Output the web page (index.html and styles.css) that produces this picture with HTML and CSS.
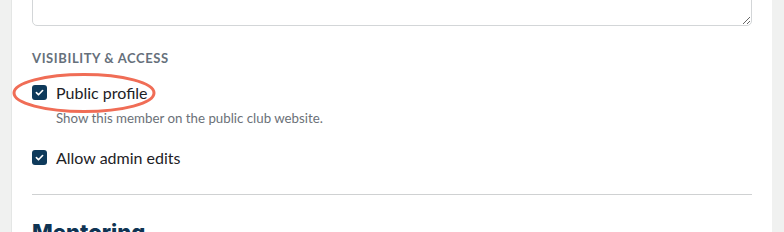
FILE: index.html
```html
<!DOCTYPE html>
<html lang="en">
<head>
  <meta charset="UTF-8">
  <title>Member settings</title>
  <link rel="stylesheet" href="styles.css">
</head>
<body>
  <div class="card">
    <textarea class="notes"></textarea>

    <section class="group">
      <h4 class="group-title">Visibility &amp; access</h4>

      <div class="check-row highlight">
        <label class="check">
          <span class="box">
            <svg viewBox="0 0 16 16" width="11" height="11"><path d="M3.5 8.3l3 3 6-6.2" fill="none" stroke="#fff" stroke-width="2.4" stroke-linecap="round" stroke-linejoin="round"/></svg>
          </span>
          Public profile
        </label>
        <svg class="circle" viewBox="0 0 146 42" width="146" height="42"><ellipse cx="73" cy="21" rx="70" ry="18.5" fill="none" stroke="#f06d56" stroke-width="3"/></svg>
      </div>
      <p class="help">Show this member on the public club website.</p>

      <div class="check-row">
        <label class="check">
          <span class="box">
            <svg viewBox="0 0 16 16" width="11" height="11"><path d="M3.5 8.3l3 3 6-6.2" fill="none" stroke="#fff" stroke-width="2.4" stroke-linecap="round" stroke-linejoin="round"/></svg>
          </span>
          Allow admin edits
        </label>
      </div>
    </section>

    <hr class="divider">

    <h2 class="section-title">Mentoring</h2>
  </div>
</body>
</html>
```

FILE: styles.css
```css
body {
  margin: 0;
  background: #f0f1f0;
  font-family: 'Lato', 'Liberation Sans', sans-serif;
  color: #1d2125;
  overflow: hidden;
}

.card {
  background: #fff;
  margin: -60px 12px 0 11px;
  border-left: 1px solid #e4e6e5;
  padding: 0 20px 40px 20px;
}

.notes {
  display: block;
  box-sizing: border-box;
  width: 100%;
  height: 86px;
  border: 1px solid #d3d6d8;
  border-radius: 5px;
  background: #fff;
  resize: vertical;
}

.group {
  margin-top: 24px;
}

.group-title {
  margin: 0 0 15.5px;
  font-size: 13px;
  font-weight: 700;
  text-transform: uppercase;
  letter-spacing: 0.6px;
  color: #66707b;
}

.check-row {
  position: relative;
  display: flex;
  align-items: center;
  height: 22px;
}

.check {
  display: flex;
  align-items: center;
  gap: 9px;
  font-size: 16px;
  color: #1d2125;
}

.box {
  display: inline-flex;
  align-items: center;
  justify-content: center;
  width: 15px;
  height: 15px;
  border-radius: 3px;
  background: #0e3a5b;
}

.circle {
  position: absolute;
  left: -21px;
  top: -10px;
}

.help {
  margin: 6px 0 21px 24px;
  font-size: 13.3px;
  color: #6b7178;
}

.divider {
  border: none;
  border-top: 1px solid #cfd1d2;
  margin: 25.5px 0 0;
}

.section-title {
  margin: 24px 0 0;
  font-family: 'Inter', 'DejaVu Sans', sans-serif;
  font-size: 22px;
  font-weight: 800;
  color: #0f3453;
}
```
